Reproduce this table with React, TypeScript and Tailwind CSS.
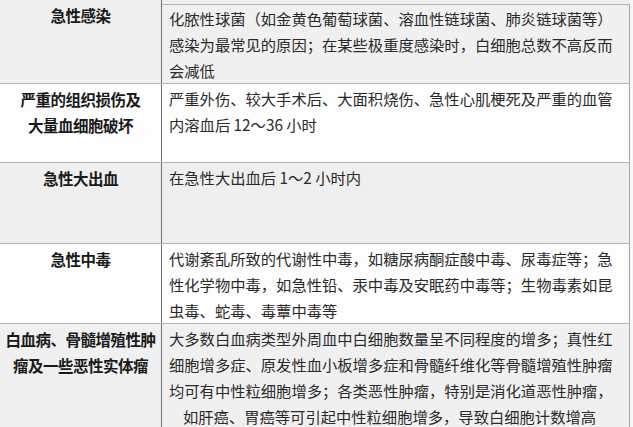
const rows = [
  {
    h: 'h-[83px]',
    bg: 'bg-[#f0f0f0]',
    left: ['急性感染'],
    right: [
      '化脓性球菌（如金黄色葡萄球菌、溶血性链球菌、肺炎链球菌等）',
      '感染为最常见的原因；在某些极重度感染时，白细胞总数不高反而',
      '会减低',
    ],
    top: true,
  },
  {
    h: 'h-[79px]',
    bg: 'bg-[#fdfdfd]',
    left: ['严重的组织损伤及', '大量血细胞破坏'],
    right: ['严重外伤、较大手术后、大面积烧伤、急性心肌梗死及严重的血管', '内溶血后 12～36 小时'],
  },
  {
    h: 'h-[81px]',
    bg: 'bg-[#efefef]',
    left: ['急性大出血'],
    right: ['在急性大出血后 1～2 小时内'],
  },
  {
    h: 'h-[80px]',
    bg: 'bg-[#fdfdfd]',
    left: ['急性中毒'],
    right: [
      '代谢紊乱所致的代谢性中毒，如糖尿病酮症酸中毒、尿毒症等；急',
      '性化学物中毒，如急性铅、汞中毒及安眠药中毒等；生物毒素如昆',
      '虫毒、蛇毒、毒蕈中毒等',
    ],
  },
  {
    h: 'h-[104px]',
    bg: 'bg-[#f0f0f0]',
    left: ['白血病、骨髓增殖性肿', '瘤及一些恶性实体瘤'],
    right: [
      '大多数白血病类型外周血中白细胞数量呈不同程度的增多；真性红',
      '细胞增多症、原发性血小板增多症和骨髓纤维化等骨髓增殖性肿瘤',
      '均可有中性粒细胞增多；各类恶性肿瘤，特别是消化道恶性肿瘤，',
      '如肝癌、胃癌等可引起中性粒细胞增多，导致白细胞计数增高',
    ],
  },
];

export default function App() {
  return (
    <div
      className="w-[633px] h-[427px] overflow-hidden bg-[#f7f7f7] flex flex-col"
      style={{ fontFamily: '"Noto Sans CJK SC", "Noto Sans", sans-serif' }}
    >
      {rows.map((r, i) => (
        <div
          key={i}
          className={`flex shrink-0 overflow-hidden w-[630px] ${r.h} ${r.bg} ${i > 0 ? 'border-t border-[#b4b4b4]' : ''}`}
        >
          <div className="w-[162px] shrink-0 border-r border-[#6e6e6e] flex flex-col items-center pt-[2px] text-[15.5px] leading-[26px] font-bold text-[#1a1a1a]">
            {r.left.map((t, j) => (
              <div key={j} className="whitespace-nowrap tracking-[-0.5px]">{t}</div>
            ))}
          </div>
          <div
            className={`flex-1 border-r border-[#a8a8a8] pl-[7px] text-[15.3px] leading-[26px] text-[#2a2a2a] ${
              r.top ? 'border-t border-t-[#b4b4b4] mt-[4px] pt-0' : 'pt-[1px]'
            }`}
          >
            {r.right.map((t, j) => (
              <div key={j} className={`whitespace-nowrap ${i === 4 && j === 3 ? 'pl-[14px]' : ''}`}>
                {t}
              </div>
            ))}
          </div>
        </div>
      ))}
    </div>
  );
}
